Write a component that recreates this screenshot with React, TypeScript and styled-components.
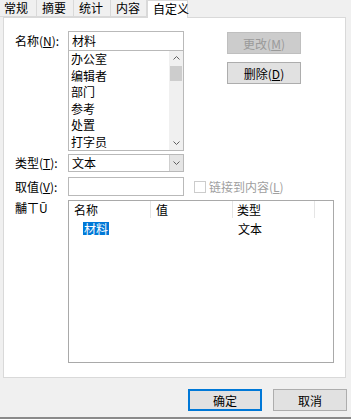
import React from "react";
import styled, { createGlobalStyle } from "styled-components";

const GlobalStyle = createGlobalStyle`
  html, body { margin: 0; padding: 0; background: #f0f0f0; }
  body {
    font-family: "Noto Sans CJK SC", "Microsoft YaHei", sans-serif;
    font-size: 12px;
    color: #000;
  }
  * { box-sizing: border-box; }
`;

const Window = styled.div`
  width: 351px;
  height: 419px;
  display: flex;
  flex-direction: column;
  overflow: hidden;
  background: #f0f0f0;
`;

const TabBar = styled.div`
  display: flex;
  height: 17px;
  align-items: flex-start;
  position: relative;
  z-index: 1;
`;

const Tab = styled.div<{ $w: number; $active?: boolean; $pl?: number }>`
  width: ${(p) => p.$w}px;
  height: ${(p) => (p.$active ? 18 : 17)}px;
  padding-left: ${(p) => p.$pl ?? 5}px;
  line-height: 16px;
  white-space: nowrap;
  background: ${(p) => (p.$active ? "#fff" : "#f0f0f0")};
  border-right: 1px solid #d9d9d9;
  border-left: ${(p) => (p.$active ? "1px solid #d9d9d9" : "none")};
  border-top: ${(p) => (p.$active ? "1px solid #d9d9d9" : "none")};
  border-bottom: ${(p) => (p.$active ? "none" : "1px solid #d9d9d9")};
`;

const Panel = styled.div`
  margin: 0 5px 0 3px;
  height: 361px;
  flex: none;
  border: 1px solid #d9d9d9;
  background: #fff;
  padding: 13px 0 0 11px;
  display: flex;
  flex-direction: column;
`;

const Row = styled.div<{ $mt?: number }>`
  display: flex;
  align-items: flex-start;
  margin-top: ${(p) => p.$mt ?? 0}px;
`;

const Label = styled.div<{ $h: number }>`
  width: 53px;
  height: ${(p) => p.$h}px;
  display: flex;
  align-items: center;
  line-height: 14px;
  white-space: nowrap;
`;

const TopLabel = styled.div`
  width: 53px;
  padding-top: 1px;
  line-height: 14px;
  white-space: nowrap;
`;

const U = styled.span`
  text-decoration: underline;
`;

const Combo = styled.div`
  width: 116px;
  display: flex;
  flex-direction: column;
`;

const TextBox = styled.div<{ $h: number }>`
  width: 116px;
  height: ${(p) => p.$h}px;
  border: 1px solid #b9b9b9;
  background: #fff;
  padding-left: 3px;
  line-height: ${(p) => p.$h - 3}px;
`;

const ListBox = styled.div`
  height: 100px;
  border: 1px solid #b9b9b9;
  border-top: none;
  display: flex;
  margin-top: 0;
`;

const ListItems = styled.div`
  flex: 1;
  padding: 0 0 0 2px;
  overflow: hidden;
`;

const ListItem = styled.div`
  height: 16.5px;
  line-height: 16.5px;
  white-space: nowrap;
`;

const ScrollBar = styled.div`
  width: 14px;
  background: #f0f0f0;
  display: flex;
  flex-direction: column;
  align-items: center;
`;

const ScrollArrow = styled.div`
  height: 14px;
  width: 14px;
  display: flex;
  align-items: center;
  justify-content: center;
`;

const ScrollTrack = styled.div`
  flex: 1;
  width: 100%;
  padding: 1px 1px 0 1px;
`;

const Thumb = styled.div`
  height: 15px;
  background: #cdcdcd;
`;

const ButtonCol = styled.div`
  margin-left: 43px;
  padding-top: 1px;
  display: flex;
  flex-direction: column;
  gap: 8px;
`;

const Button = styled.div<{ $disabled?: boolean; $default?: boolean }>`
  width: 74px;
  height: 22px;
  display: flex;
  align-items: center;
  justify-content: center;
  background: ${(p) => (p.$disabled ? "#cccccc" : "#e1e1e1")};
  border: 1px solid
    ${(p) => (p.$default ? "#0078d7" : p.$disabled ? "#bfbfbf" : "#adadad")};
  box-shadow: ${(p) => (p.$default ? "inset 0 0 0 1px #0078d7" : "none")};
  color: ${(p) => (p.$disabled ? "#9a9a9a" : "#000")};
  white-space: nowrap;
`;

const Select = styled.div`
  width: 116px;
  height: 18px;
  border: 1px solid #b9b9b9;
  display: flex;
  background: #fff;
`;

const SelectText = styled.div`
  flex: 1;
  padding-left: 3px;
  line-height: 16px;
`;

const SelectButton = styled.div`
  width: 14px;
  background: #e5e5e5;
  border-left: 1px solid #cfcfcf;
  display: flex;
  align-items: center;
  justify-content: center;
`;

const CheckWrap = styled.div`
  margin-left: 10px;
  height: 19px;
  display: flex;
  align-items: center;
  gap: 3px;
  color: #a0a0a0;
  white-space: nowrap;
`;

const CheckBox = styled.div`
  width: 12px;
  height: 12px;
  border: 1px solid #cccccc;
  background: #fff;
`;

const ListView = styled.div`
  width: 266px;
  height: 163px;
  border: 1px solid #a9a9a9;
  background: #fff;
  display: flex;
  flex-direction: column;
`;

const HeaderRow = styled.div`
  display: flex;
  height: 17px;
`;

const HeaderCell = styled.div<{ $w: number; $pl?: number }>`
  width: ${(p) => p.$w}px;
  padding-left: ${(p) => p.$pl ?? 5}px;
  line-height: 17px;
  border-right: 1px solid #e5e5e5;
  white-space: nowrap;
`;

const DataRow = styled.div`
  display: flex;
  height: 17px;
  margin-top: 2px;
`;

const DataCell = styled.div<{ $w: number; $pl: number }>`
  width: ${(p) => p.$w}px;
  padding-left: ${(p) => p.$pl}px;
  line-height: 17px;
  white-space: nowrap;
  display: flex;
  align-items: center;
`;

const Selected = styled.span`
  background: #0078d7;
  color: #fff;
  padding: 0 1px;
  line-height: 13px;
  height: 13px;
  display: inline-block;
`;

const Footer = styled.div`
  margin-top: 11px;
  display: flex;
  justify-content: flex-end;
  gap: 11px;
  padding-right: 4px;
`;

const BottomEdge = styled.div`
  margin-top: 6px;
  height: 2px;
  background: #8a8a8a;
`;

const Chevron = ({ up }: { up?: boolean }) => (
  <svg width="7" height="4" viewBox="0 0 7 4">
    <path
      d={up ? "M0.5 3.5 L3.5 0.5 L6.5 3.5" : "M0.5 0.5 L3.5 3.5 L6.5 0.5"}
      fill="none"
      stroke="#606060"
      strokeWidth="1"
    />
  </svg>
);

const items = ["办公室", "编辑者", "部门", "参考", "处置", "打字员"];

export default function App() {
  return (
    <Window>
      <GlobalStyle />
      <TabBar>
        <Tab $w={37} $pl={4}>常规</Tab>
        <Tab $w={37}>摘要</Tab>
        <Tab $w={37}>统计</Tab>
        <Tab $w={36}>内容</Tab>
        <Tab $w={41} $active>自定义</Tab>
      </TabBar>
      <Panel>
        <Row>
          <Label $h={19}>
            名称(<U>N</U>):
          </Label>
          <Combo>
            <TextBox $h={20}>材料</TextBox>
            <ListBox>
              <ListItems>
                {items.map((t) => (
                  <ListItem key={t}>{t}</ListItem>
                ))}
              </ListItems>
              <ScrollBar>
                <ScrollArrow>
                  <Chevron up />
                </ScrollArrow>
                <ScrollTrack>
                  <Thumb />
                </ScrollTrack>
                <ScrollArrow>
                  <Chevron />
                </ScrollArrow>
              </ScrollBar>
            </ListBox>
          </Combo>
          <ButtonCol>
            <Button $disabled>
              更改(<U>M</U>)
            </Button>
            <Button>
              删除(<U>D</U>)
            </Button>
          </ButtonCol>
        </Row>
        <Row $mt={3}>
          <Label $h={18}>
            类型(<U>T</U>):
          </Label>
          <Select>
            <SelectText>文本</SelectText>
            <SelectButton>
              <Chevron />
            </SelectButton>
          </Select>
        </Row>
        <Row $mt={5}>
          <Label $h={19}>
            取值(<U>V</U>):
          </Label>
          <TextBox $h={19} />
          <CheckWrap>
            <CheckBox />
            <span>
              链接到内容(<U>L</U>)
            </span>
          </CheckWrap>
        </Row>
        <Row $mt={4}>
          <TopLabel>黼ㄒŪ</TopLabel>
          <ListView>
            <HeaderRow>
              <HeaderCell $w={82}>名称</HeaderCell>
              <HeaderCell $w={82}>值</HeaderCell>
              <HeaderCell $w={82} $pl={4}>类型</HeaderCell>
            </HeaderRow>
            <DataRow>
              <DataCell $w={82} $pl={14}>
                <Selected>材料</Selected>
              </DataCell>
              <DataCell $w={82} $pl={5} />
              <DataCell $w={82} $pl={5}>文本</DataCell>
            </DataRow>
          </ListView>
        </Row>
      </Panel>
      <Footer>
        <Button $default>确定</Button>
        <Button>取消</Button>
      </Footer>
      <BottomEdge />
    </Window>
  );
}
